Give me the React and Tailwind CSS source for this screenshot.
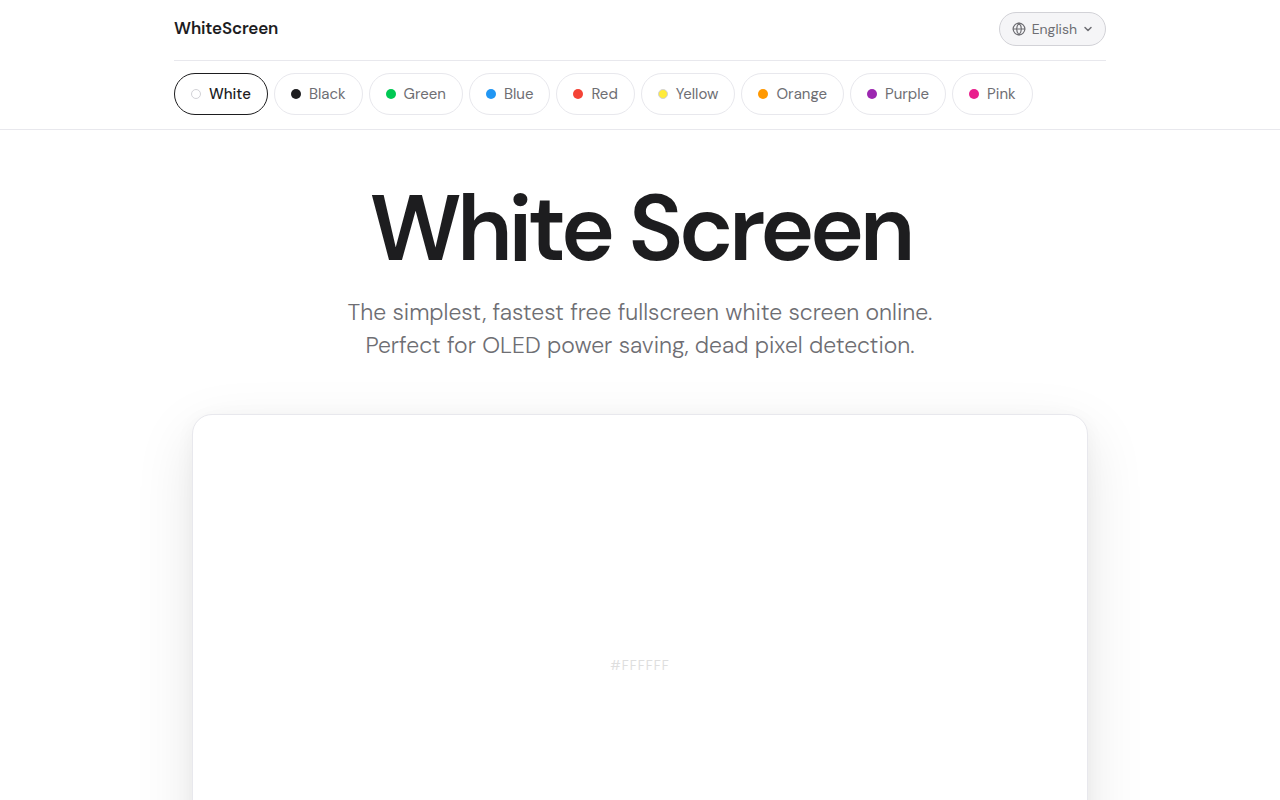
import { Globe } from "lucide-react";

const colors = [
  { name: "White", dot: "bg-white border border-[#d2d2d7]" },
  { name: "Black", dot: "bg-[#1d1d1f]" },
  { name: "Green", dot: "bg-[#00c853]" },
  { name: "Blue", dot: "bg-[#2196f3]" },
  { name: "Red", dot: "bg-[#f44336]" },
  { name: "Yellow", dot: "bg-[#ffeb3b] border border-[#d2d2d7]" },
  { name: "Orange", dot: "bg-[#ff9800]" },
  { name: "Purple", dot: "bg-[#9c27b0]" },
  { name: "Pink", dot: "bg-[#e91e8c]" },
];

function LanguagePicker() {
  return (
    <label className="flex h-[34px] items-center gap-[6px] rounded-full border border-[#d2d2d7] bg-[#f5f5f7] px-3 text-[#6e6e73]">
      <Globe size={14} strokeWidth={2} aria-hidden="true" />
      <select
        aria-label="Language"
        defaultValue="en"
        className="field-sizing-content appearance-none bg-transparent text-sm leading-5 outline-none"
      >
        <option value="en">English</option>
      </select>
      <svg width="10" height="10" viewBox="0 0 10 10" fill="none" aria-hidden="true">
        <path d="M2 3.5 5 6.5 8 3.5" stroke="currentColor" strokeWidth="1.5" strokeLinecap="round" strokeLinejoin="round" />
      </svg>
    </label>
  );
}

function ColorLink({ name, dot, active }) {
  return (
    <a
      href={"#" + name.toLowerCase()}
      aria-current={active ? "page" : undefined}
      className={
        "flex h-[42px] items-center gap-2 rounded-full border px-4 text-[15px] leading-6 " +
        (active
          ? "border-[#1d1d1f] font-medium text-[#1d1d1f]"
          : "border-[#e8e8ed] font-normal text-[#6e6e73]")
      }
    >
      <span className={"size-[10px] rounded-full " + dot} />
      {name}
    </a>
  );
}

export default function App() {
  return (
    <div className="min-h-screen bg-white font-['DM_Sans','Inter',sans-serif] text-[#1d1d1f] antialiased">
      <header className="border-b border-[#e8e8ed]">
        <div className="mx-auto max-w-[980px] px-6">
          <div className="flex items-start justify-between border-b border-[#e8e8ed] pt-3 pb-[14px]">
            <a href="#home" className="py-1 text-[17px] leading-6 font-semibold tracking-[-0.01em]">
              WhiteScreen
            </a>
            <LanguagePicker />
          </div>
          <nav aria-label="Colors" className="flex flex-wrap gap-[6px] pt-3 pb-[14px]">
            {colors.map((color, i) => (
              <ColorLink key={color.name} {...color} active={i === 0} />
            ))}
          </nav>
        </div>
      </header>
      <main className="mx-auto max-w-[944px] px-6 pt-12 pb-24">
        <h1 className="text-center text-[92px] leading-[102px] font-semibold tracking-tighter">
          White Screen
        </h1>
        <p className="mt-4 text-center text-[23px] leading-[33px] font-light text-[#6e6e73]">
          The simplest, fastest free fullscreen white screen online.
          <br />
          Perfect for OLED power saving, dead pixel detection.
        </p>
        <section
          aria-label="White preview"
          className="mt-[52px] flex aspect-video items-center justify-center rounded-[20px] border border-[#e8e8ed] bg-white shadow-[0_20px_60px_rgba(0,0,0,0.1),0_4px_20px_rgba(0,0,0,0.04)]"
        >
          <span className="text-[13px] leading-5 tracking-[0.08em] text-[#dedede]">#FFFFFF</span>
        </section>
      </main>
    </div>
  );
}
